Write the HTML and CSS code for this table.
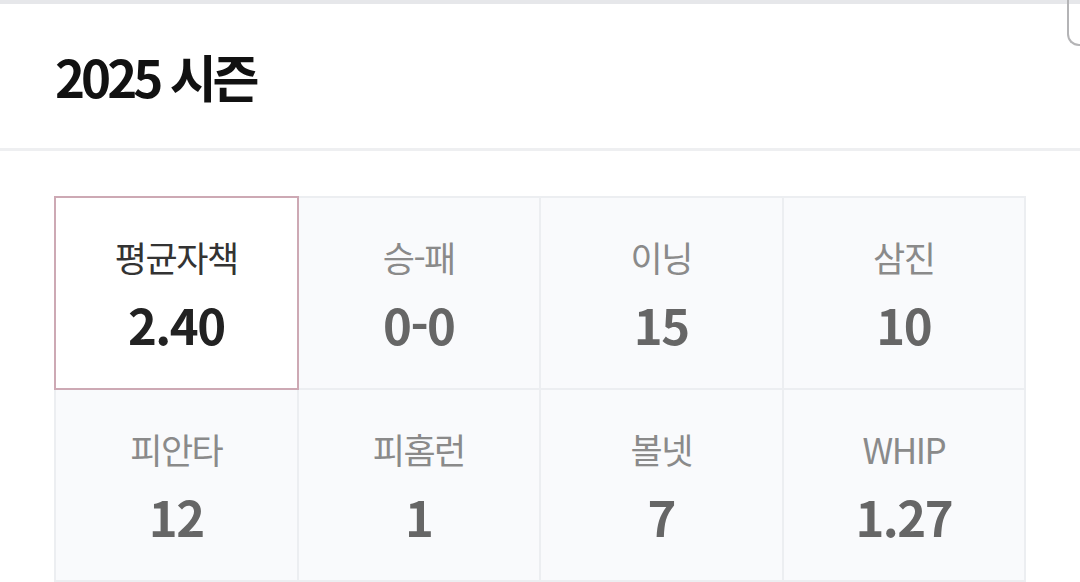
FILE: index.html
```html
<!DOCTYPE html>
<html lang="ko">
<head>
<meta charset="utf-8">
<link rel="stylesheet" href="styles.css">
</head>
<body>
<div class="topline"></div>
<div class="corner"></div>
<header class="head">
  <h1 class="title">2025 시즌</h1>
</header>
<section class="stats">
  <div class="grid">
    <div class="cell active"><div class="label">평균자책</div><div class="value">2.40</div></div>
    <div class="cell"><div class="label">승-패</div><div class="value">0-0</div></div>
    <div class="cell"><div class="label">이닝</div><div class="value">15</div></div>
    <div class="cell"><div class="label">삼진</div><div class="value">10</div></div>
    <div class="cell"><div class="label">피안타</div><div class="value">12</div></div>
    <div class="cell"><div class="label">피홈런</div><div class="value">1</div></div>
    <div class="cell"><div class="label">볼넷</div><div class="value">7</div></div>
    <div class="cell"><div class="label">WHIP</div><div class="value">1.27</div></div>
  </div>
</section>
</body>
</html>
```
FILE: styles.css
```css
html, body {
  margin: 0;
  padding: 0;
  background: #ffffff;
  font-family: "Noto Sans CJK KR", "Noto Sans", sans-serif;
  overflow: hidden;
}
.topline {
  height: 4px;
  background: #e6e7ea;
}
.corner {
  position: absolute;
  left: 1067px;
  top: -10px;
  width: 30px;
  height: 56px;
  border-left: 2px solid #b4b4b6;
  border-bottom: 2px solid #b4b4b6;
  border-bottom-left-radius: 12px;
  box-sizing: border-box;
}
.head {
  height: 144px;
  display: flex;
  align-items: center;
  padding-left: 55px;
  border-bottom: 3px solid #eeeff1;
}
.title {
  margin: 0;
  font-size: 51px;
  font-weight: 700;
  letter-spacing: -4px;
  color: #111111;
  line-height: 1;
}
.stats {
  padding: 45px 0 0 54px;
}
.grid {
  width: 972px;
  box-sizing: border-box;
  display: grid;
  grid-template-columns: repeat(4, 1fr);
  grid-auto-rows: 190px;
  gap: 2px;
  padding: 2px;
  background: #eceef1;
}
.cell {
  background: #f9fafc;
  display: flex;
  flex-direction: column;
  align-items: center;
  justify-content: center;
}
.cell.active {
  background: #ffffff;
  box-shadow: 0 0 0 2px #cda9b4;
  position: relative;
}
.label {
  font-size: 35px;
  letter-spacing: -1.5px;
  color: #8a8a8a;
  line-height: 1;
}
.value {
  margin-top: 25px;
  font-size: 49px;
  font-weight: 700;
  letter-spacing: -1.5px;
  color: #666666;
  line-height: 1;
}
.cell.active .label { color: #333333; }
.cell.active .value { color: #222222; }
```
